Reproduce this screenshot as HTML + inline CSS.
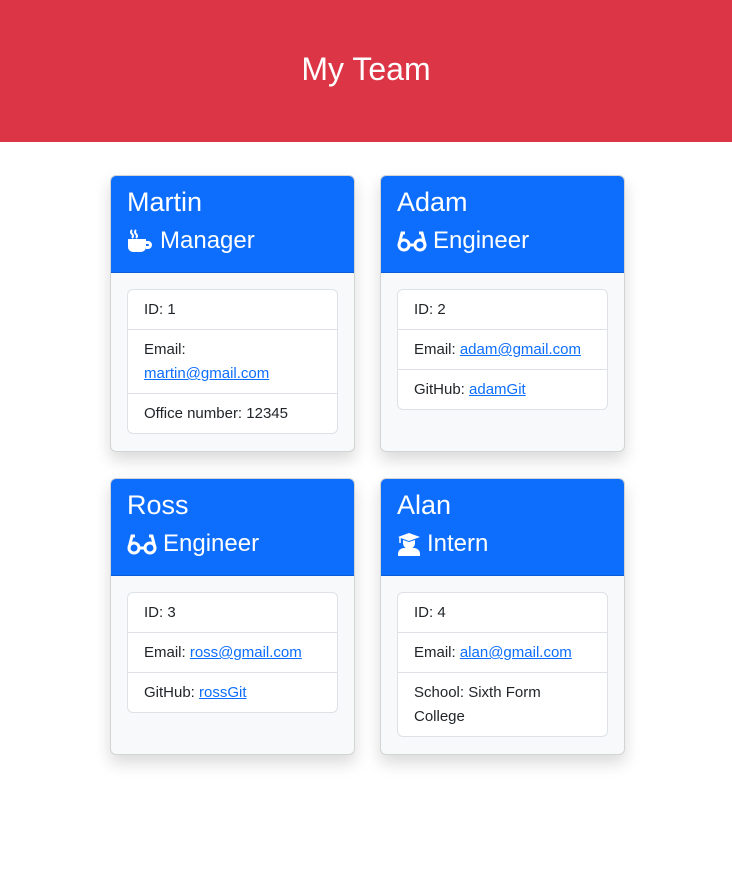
<!DOCTYPE html>
<html><head><meta charset="utf-8"><style>
*{box-sizing:border-box}
body{margin:0;font-family:"Liberation Sans",sans-serif;background:#fff;color:#212529;width:732px;height:871px}
.hd{background:#dc3545;height:142px;color:#fff;font-size:32px;text-align:center;line-height:138px}
.grid{position:absolute;left:110px;top:175px;display:grid;grid-template-columns:245px 245px;column-gap:25px;row-gap:26px}
.card{border:1px solid rgba(0,0,0,.15);border-radius:6px;background:#f8f9fa;box-shadow:0 8px 16px rgba(0,0,0,.15);overflow:hidden;height:277px}
.ch{background:#0d6efd;color:#fff;padding:9px 16px 0;height:97px;border-bottom:1px solid rgba(0,0,0,.15)}
.nm{font-size:27px;line-height:34px}
.rl{font-size:24px;line-height:34px;margin-top:5px;display:flex;align-items:center;gap:6px}
.cb{padding:16px}
ul{list-style:none;margin:0;padding:0;border:1px solid #dee2e6;border-radius:6px;background:#fff}
li{padding:8px 16px 7px;font-size:15px;line-height:24px;border-top:1px solid #dee2e6}
li:first-child{border-top:none}
a{color:#0d6efd}
</style></head><body>
<div class="hd">My Team</div>
<div class="grid">
<div class="card"><div class="ch"><div class="nm">Martin</div><div class="rl"><svg width="27" height="24" viewBox="0 0 27 24" fill="#fff"><path d="M1 10h18v8a5 5 0 0 1-5 5H6a5 5 0 0 1-5-5z"/><path d="M19 12h2a4 4 0 0 1 0 8h-2v-3h2a1 1 0 0 0 0-2h-2z"/><path d="M5 1q-2 2 0 4t0 4M9 1q-2 2 0 4t0 4" stroke="#fff" stroke-width="2" fill="none"/></svg>Manager</div></div>
<div class="cb"><ul><li>ID: 1</li><li>Email:<br><a href="#">martin@gmail.com</a></li><li>Office number: 12345</li></ul></div></div>
<div class="card"><div class="ch"><div class="nm">Adam</div><div class="rl"><svg width="30" height="22" viewBox="0 0 30 22" fill="none" stroke="#fff" stroke-width="3"><circle cx="7" cy="15" r="5"/><circle cx="23" cy="15" r="5"/><path d="M12 15h6M2 15L5 3h3M28 15L25 3h-3"/></svg>Engineer</div></div>
<div class="cb"><ul><li>ID: 2</li><li>Email: <a href="#">adam@gmail.com</a></li><li>GitHub: <a href="#">adamGit</a></li></ul></div></div>
<div class="card"><div class="ch"><div class="nm">Ross</div><div class="rl"><svg width="30" height="22" viewBox="0 0 30 22" fill="none" stroke="#fff" stroke-width="3"><circle cx="7" cy="15" r="5"/><circle cx="23" cy="15" r="5"/><path d="M12 15h6M2 15L5 3h3M28 15L25 3h-3"/></svg>Engineer</div></div>
<div class="cb"><ul><li>ID: 3</li><li>Email: <a href="#">ross@gmail.com</a></li><li>GitHub: <a href="#">rossGit</a></li></ul></div></div>
<div class="card"><div class="ch"><div class="nm">Alan</div><div class="rl"><svg width="24" height="24" viewBox="0 0 24 24" fill="#fff"><path d="M12 1L23 5 12 9 1 5z"/><path d="M3 5v6" stroke="#fff" stroke-width="1.5"/><path d="M6 8v3a6 6 0 0 0 12 0V8l-6 2z"/><path d="M1 24v-2a6 6 0 0 1 6-6h10a6 6 0 0 1 6 6v2z"/></svg>Intern</div></div>
<div class="cb"><ul><li>ID: 4</li><li>Email: <a href="#">alan@gmail.com</a></li><li>School: Sixth Form College</li></ul></div></div>
</div>
</body></html>
